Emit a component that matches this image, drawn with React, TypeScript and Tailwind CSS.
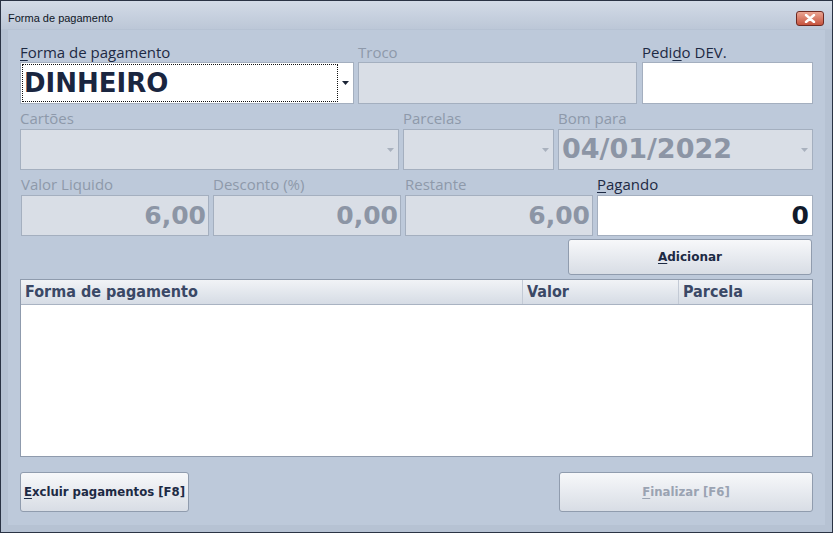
import React from 'react';

const seg = { fontFamily: '"Open Sans", "Noto Sans", sans-serif' };
const heavy = { fontFamily: '"DejaVu Sans", "Open Sans", sans-serif' };
const cond = { fontFamily: '"DejaVu Sans Condensed", "Liberation Sans Narrow", "Roboto", sans-serif' };

function Label({ text, u, disabled, className = '' }: { text: string; u?: number; disabled?: boolean; className?: string }) {
  return (
    <div
      className={`h-[20px] text-[15px] leading-[20px] ${disabled ? 'text-[#8e99aa]' : 'text-[#1d2a44]'} ${className}`}
      style={seg}
    >
      {u === undefined ? (
        text
      ) : (
        <>
          {text.slice(0, u)}
          <span className="underline underline-offset-2">{text[u]}</span>
          {text.slice(u + 1)}
        </>
      )}
    </div>
  );
}

function Arrow({ dark }: { dark?: boolean }) {
  return (
    <svg width="7" height="4" viewBox="0 0 7 4" className="shrink-0">
      <path d="M0 0 H7 L3.5 4 Z" fill={dark ? '#1b2435' : '#a9b1be'} />
    </svg>
  );
}

function DisabledBox({ value, className = '', arrow }: { value?: string; className?: string; arrow?: boolean }) {
  return (
    <div
      className={`flex items-center border border-[#a4afbf] bg-[#d9dee6] text-[25px] font-bold text-[#8c95a5] ${className}`}
      style={heavy}
    >
      <div className="flex-1 truncate text-right pr-[2px]">{value}</div>
      {arrow && (
        <div className="w-[16px] flex justify-center">
          <Arrow />
        </div>
      )}
    </div>
  );
}

function Button({ children, className = '', disabled }: { children: React.ReactNode; className?: string; disabled?: boolean }) {
  return (
    <div
      className={`flex items-center justify-center rounded-[3px] border border-[#909cae] bg-gradient-to-b from-[#f7f8fa] to-[#d8dde5] text-[13px] font-bold ${disabled ? 'text-[#9aa3b2]' : 'text-[#1d2a44]'} ${className}`}
      style={cond}
    >
      {children}
    </div>
  );
}

export default function App() {
  return (
    <div className="w-[833px] h-[533px] border border-[#2a3344] bg-[#b6c2d3] flex flex-col">
      {/* Title bar */}
      <div className="h-[28px] shrink-0 flex items-start justify-between pl-[7px] pr-[8px] bg-gradient-to-b from-[#d3dbe7] to-[#bcc7d7]">
        <span className="mt-[11px] text-[11px] leading-[13px] text-[#0f1626]" style={{ fontFamily: '"Liberation Sans", sans-serif' }}>
          Forma de pagamento
        </span>
        <div className="w-[28px] h-[15px] mt-[10px] rounded-[3px] border border-[#6e2a22] bg-gradient-to-b from-[#eaa593] to-[#c5523d] flex items-center justify-center">
          <svg width="12" height="9" viewBox="0 0 12 9">
            <path d="M2 1 L10 8 M10 1 L2 8" stroke="#fff" strokeWidth="2.4" strokeLinecap="round" />
          </svg>
        </div>
      </div>

      {/* Panel */}
      <div className="flex-1 mx-[7px] mb-[7px] mt-[1px] bg-[#bdc9da] pl-[12px] pt-[12px] flex flex-col">
        {/* Row 1 */}
        <div className="flex">
          <div className="w-[334px]">
            <Label text="Forma de pagamento" u={0} />
            <div className="h-[42px] border border-[#a4afbf] bg-white flex items-center p-[1px]">
              <div className="flex-1 h-full border border-dotted border-[#111] flex items-center pl-[1px] text-[26px] font-bold text-[#1a2640]" style={heavy}>
                DINHEIRO
              </div>
              <div className="w-[14px] flex justify-center">
                <Arrow dark />
              </div>
            </div>
          </div>
          <div className="w-[279px] ml-[4px]">
            <Label text="Troco" disabled />
            <DisabledBox className="h-[42px]" />
          </div>
          <div className="w-[171px] ml-[5px]">
            <Label text="Pedido DEV." u={4} />
            <div className="h-[42px] border border-[#a4afbf] bg-white" />
          </div>
        </div>

        {/* Row 2 */}
        <div className="flex mt-[4px]">
          <div className="w-[379px]">
            <Label text="Cartões" disabled />
            <DisabledBox className="h-[41px] mt-[1px]" arrow />
          </div>
          <div className="w-[151px] ml-[4px]">
            <Label text="Parcelas" disabled />
            <DisabledBox className="h-[41px] mt-[1px]" arrow />
          </div>
          <div className="w-[255px] ml-[4px]">
            <Label text="Bom para" disabled />
            <div
              className="h-[41px] mt-[1px] flex items-center border border-[#a4afbf] bg-[#d9dee6] text-[27px] font-bold text-[#8c95a5]"
              style={heavy}
            >
              <div className="flex-1 pl-[3px]">04/01/2022</div>
              <div className="w-[16px] flex justify-center">
                <Arrow />
              </div>
            </div>
          </div>
        </div>

        {/* Row 3 */}
        <div className="flex mt-[4px]">
          <div className="w-[188px] ml-[1px]">
            <Label text="Valor Liquido" disabled />
            <DisabledBox className="h-[41px] mt-[1px]" value="6,00" />
          </div>
          <div className="w-[188px] ml-[4px]">
            <Label text="Desconto (%)" disabled />
            <DisabledBox className="h-[41px] mt-[1px]" value="0,00" />
          </div>
          <div className="w-[188px] ml-[4px]">
            <Label text="Restante" disabled />
            <DisabledBox className="h-[41px] mt-[1px]" value="6,00" />
          </div>
          <div className="w-[216px] ml-[4px]">
            <Label text="Pagando" u={0} />
            <div
              className="h-[41px] mt-[1px] flex items-center justify-end pr-[3px] border border-[#a4afbf] bg-white text-[25px] font-bold text-[#111a2b]"
              style={heavy}
            >
              0
            </div>
          </div>
        </div>

        {/* Adicionar */}
        <div className="flex justify-end pr-[13px] mt-[3px]">
          <Button className="w-[244px] h-[36px]">
            <span style={{ fontFamily: '"DejaVu Sans", sans-serif' }} className="text-[12px]">
              <span className="underline underline-offset-2">A</span>dicionar
            </span>
          </Button>
        </div>

        {/* Grid */}
        <div className="mt-[4px] mr-[12px] h-[178px] border border-[#8f9bad] bg-white flex flex-col">
          <div
            className="h-[25px] flex bg-gradient-to-b from-[#f1f3f6] to-[#d6dce5] border-b border-[#a9b3c2] text-[16px] font-bold text-[#3a4866]"
            style={cond}
          >
            <div className="w-[502px] pl-[4px] flex items-center border-r border-[#c3cad5]">Forma de pagamento</div>
            <div className="w-[156px] pl-[4px] flex items-center border-r border-[#c3cad5]">Valor</div>
            <div className="flex-1 pl-[4px] flex items-center">Parcela</div>
          </div>
        </div>

        {/* Bottom buttons */}
        <div className="flex justify-between mt-[15px] mr-[12px]">
          <Button className="w-[169px] h-[40px]">
            <span>
              <span className="underline underline-offset-2">E</span>xcluir pagamentos [F8]
            </span>
          </Button>
          <Button className="w-[254px] h-[40px]" disabled>
            <span>
              <span className="underline underline-offset-2">F</span>inalizar [F6]
            </span>
          </Button>
        </div>
      </div>
    </div>
  );
}
